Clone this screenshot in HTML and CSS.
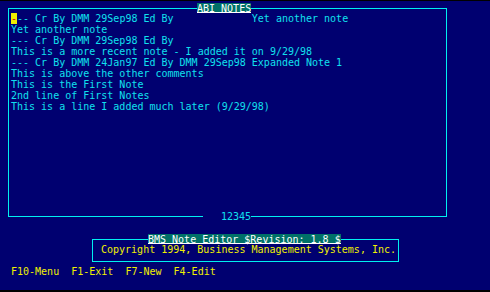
FILE: index.html
```html
<!DOCTYPE html>
<html lang="en">
<head>
    <meta charset="UTF-8">
    <title>BMS Note Editor</title>
    <link rel="stylesheet" href="styles.css">
</head>
<body>
    <div class="screen">
        <div class="notes">
            <div class="notes_title">ABI NOTES</div>
<pre class="notes_text"><span class="cursor">-</span>-- Cr By DMM 29Sep98 Ed By             Yet another note
Yet another note
--- Cr By DMM 29Sep98 Ed By
This is a more recent note - I added it on 9/29/98
--- Cr By DMM 24Jan97 Ed By DMM 29Sep98 Expanded Note 1
This is above the other comments
This is the First Note
2nd line of First Notes
This is a line I added much later (9/29/98)</pre>
            <div class="notes_count">12345</div>
        </div>
        <div class="about">
            <div class="about_title">BMS Note Editor $Revision: 1.8 $</div>
            <div class="about_text">Copyright 1994, Business Management Systems, Inc.</div>
        </div>
        <div class="keys">F10-Menu  F1-Exit  F7-New  F4-Edit</div>
    </div>
</body>
</html>
```

FILE: styles.css
```css
html {
    background: #000000;
}
body {
    margin: 0;
    font-family: "DejaVu Sans Mono", "Liberation Mono", monospace;
    font-size: 10px;
    line-height: 11px;
}
.screen {
    width: 490px;
    height: 289px;
    margin-top: 1px;
    background: #000070;
    overflow: hidden;
    display: flex;
    flex-direction: column;
    align-items: flex-start;
}
.notes {
    position: relative;
    width: 435px;
    height: 203px;
    margin: 7px 0 0 8px;
    padding: 4px 0 0 2px;
    border: 1px solid #00f0f0;
    color: #10e0ee;
}
.notes_title, .about_title {
    position: absolute;
    top: -6px;
    height: 8px;
    padding-top: 1px;
    line-height: 9px;
    background: #007068;
    color: #ffffff;
    border-bottom: 1px solid #ffffff;
    white-space: pre;
}
.notes_title {
    left: 188px;
}
.notes_text {
    margin: 0;
    font: inherit;
    line-height: 11px;
    white-space: pre;
}
.cursor {
    background: #f0f000;
    color: #e00000;
}
.notes_count {
    position: absolute;
    top: 202px;
    left: 194px;
    width: 48px;
    height: 11px;
    text-align: right;
    background: #000070;
}
.about {
    position: relative;
    width: 297px;
    height: 17px;
    margin: 22px 0 0 92px;
    padding: 4px 0 0 8px;
    border: 1px solid #00f0f0;
    color: #f0f000;
}
.about_title {
    left: 55px;
}
.about_text {
    white-space: pre;
}
.keys {
    margin-top: 4px;
    padding-left: 11px;
    color: #f0f000;
    white-space: pre;
}
```
